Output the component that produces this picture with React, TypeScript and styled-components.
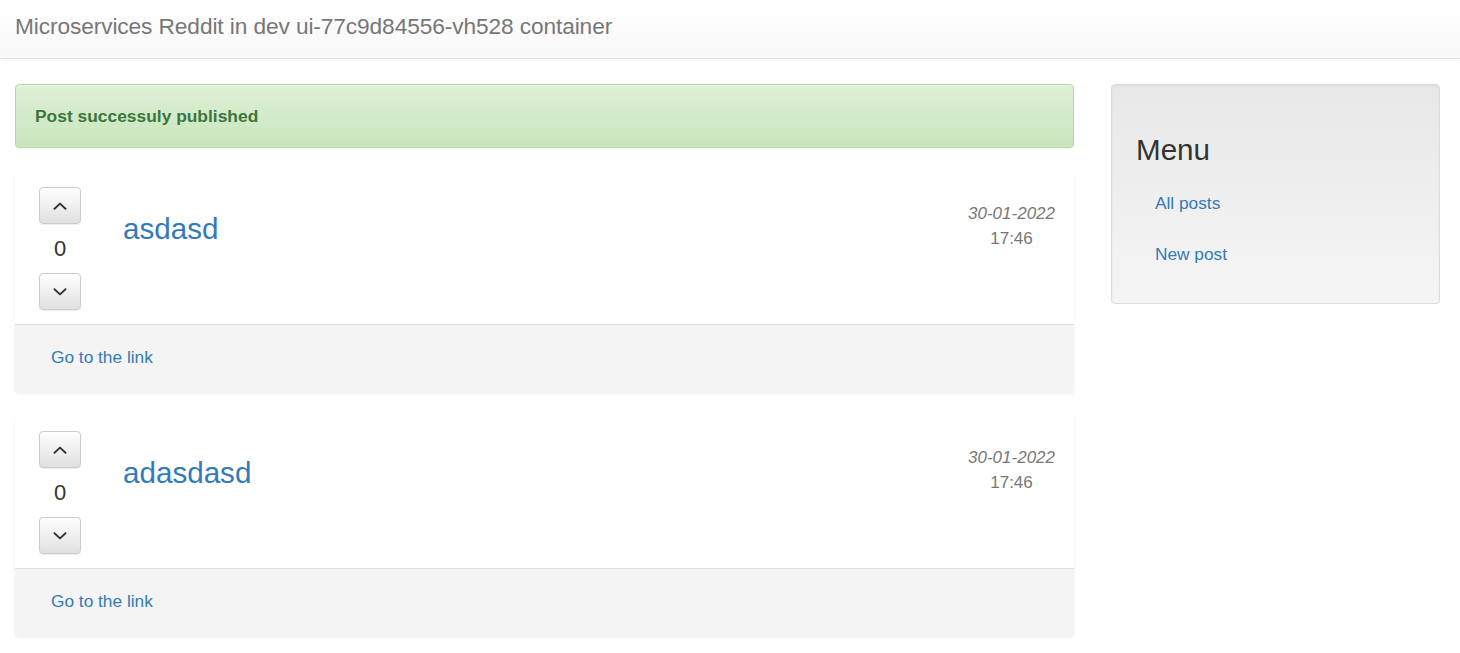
import React from "react";
import styled, { createGlobalStyle } from "styled-components";

const GlobalStyle = createGlobalStyle`
  html, body {
    margin: 0;
    padding: 0;
    background: #fff;
    font-family: "Liberation Sans", Arial, Helvetica, sans-serif;
    font-size: 16px;
    color: #333;
  }
  * { box-sizing: border-box; }
`;

const posts = [
  { id: 1, title: "asdasd", votes: 0, date: "30-01-2022", time: "17:46" },
  { id: 2, title: "adasdasd", votes: 0, date: "30-01-2022", time: "17:46" },
];

export default function App() {
  return (
    <>
      <GlobalStyle />
      <Navbar>
        <Brand href="#">Microservices Reddit in dev ui-77c9d84556-vh528 container</Brand>
      </Navbar>
      <Layout>
        <Main>
          <Alert>Post successuly published</Alert>
          {posts.map((p) => (
            <Post key={p.id}>
              <PostBody>
                <Votes>
                  <VoteButton aria-label="upvote">
                    <Chevron dir="up" />
                  </VoteButton>
                  <VoteCount>{p.votes}</VoteCount>
                  <VoteButton aria-label="downvote">
                    <Chevron dir="down" />
                  </VoteButton>
                </Votes>
                <Title href="#">{p.title}</Title>
                <DateBox>
                  <DateText>{p.date}</DateText>
                  <TimeText>{p.time}</TimeText>
                </DateBox>
              </PostBody>
              <PostFooter>
                <Link href="#">Go to the link</Link>
              </PostFooter>
            </Post>
          ))}
        </Main>
        <Side>
          <Well>
            <MenuTitle>Menu</MenuTitle>
            <MenuList>
              <li>
                <Link href="#">All posts</Link>
              </li>
              <li>
                <Link href="#">New post</Link>
              </li>
            </MenuList>
          </Well>
        </Side>
      </Layout>
    </>
  );
}

function Chevron({ dir }: { dir: "up" | "down" }) {
  return (
    <svg width="14" height="8" viewBox="0 0 14 8" fill="none">
      <path
        d={dir === "up" ? "M1.5 6.8 L7 1.6 L12.5 6.8" : "M1.5 1.2 L7 6.4 L12.5 1.2"}
        stroke="#333"
        strokeWidth="1.9"
        strokeLinecap="round"
        strokeLinejoin="round"
      />
    </svg>
  );
}

const Navbar = styled.nav`
  height: 59px;
  display: flex;
  align-items: center;
  padding: 0 15px 6px;
  background: linear-gradient(to bottom, #ffffff 0%, #f8f8f8 100%);
  border-bottom: 1px solid #e3e3e3;
  box-shadow: inset 0 1px 0 rgba(255, 255, 255, 0.15), 0 1px 5px rgba(0, 0, 0, 0.06);
`;

const Brand = styled.a`
  color: #777;
  font-size: 22.7px;
  letter-spacing: -0.1px;
  text-decoration: none;
`;

const Layout = styled.div`
  display: grid;
  grid-template-columns: 1059px 329px;
  column-gap: 37px;
  padding: 25px 15px 0;
`;

const Main = styled.div`
  display: flex;
  flex-direction: column;
`;

const Alert = styled.div`
  height: 64px;
  display: flex;
  align-items: center;
  padding: 0 19px;
  margin-bottom: 24px;
  border: 1px solid #b2dba1;
  border-radius: 4px;
  background: linear-gradient(to bottom, #dff0d8 0%, #c8e5bc 100%);
  color: #3c763d;
  font-weight: bold;
  font-size: 17.4px;
  box-shadow: inset 0 1px 0 rgba(255, 255, 255, 0.25), 0 1px 2px rgba(0, 0, 0, 0.05);
`;

const Post = styled.div`
  margin-bottom: 23px;
  border-radius: 4px;
  box-shadow: 0 1px 3px rgba(0, 0, 0, 0.07);
  background: #fff;
`;

const PostBody = styled.div`
  height: 153px;
  display: flex;
  align-items: flex-start;
  padding: 15px 19px 0 24px;
  border-bottom: 1px solid #dddddd;
`;

const Votes = styled.div`
  width: 42px;
  display: flex;
  flex-direction: column;
  align-items: center;
`;

const VoteButton = styled.button`
  width: 42px;
  height: 37px;
  padding: 0;
  display: flex;
  align-items: center;
  justify-content: center;
  border: 1px solid #ccc;
  border-radius: 4px;
  background: linear-gradient(to bottom, #ffffff 0%, #e0e0e0 100%);
  box-shadow: inset 0 1px 0 rgba(255, 255, 255, 0.15), 0 1px 1px rgba(0, 0, 0, 0.075);
  cursor: pointer;
`;

const VoteCount = styled.div`
  height: 49px;
  display: flex;
  align-items: center;
  justify-content: center;
  font-size: 22px;
  color: #333;
`;

const Title = styled.a`
  margin: 22px 0 0 42px;
  font-size: 29.6px;
  line-height: 40px;
  color: #337ab7;
  text-decoration: none;
  flex: 1;
`;

const DateBox = styled.div`
  margin-top: 14px;
  display: flex;
  flex-direction: column;
  align-items: center;
  color: #777;
  font-size: 17px;
  line-height: 25px;
`;

const DateText = styled.em``;

const TimeText = styled.span``;

const PostFooter = styled.div`
  height: 68px;
  display: flex;
  align-items: center;
  padding: 0 36px 4px;
  background: #f4f4f4;
  border-radius: 0 0 4px 4px;
`;

const Link = styled.a`
  color: #337ab7;
  font-size: 17.3px;
  text-decoration: none;
`;

const Side = styled.aside``;

const Well = styled.div`
  height: 220px;
  padding: 46px 24px 0;
  border: 1px solid #dcdcdc;
  border-radius: 4px;
  background: linear-gradient(to bottom, #e8e8e8 0%, #f5f5f5 100%);
  box-shadow: inset 0 1px 3px rgba(0, 0, 0, 0.05), 0 1px 0 rgba(255, 255, 255, 0.1);
`;

const MenuTitle = styled.h3`
  margin: 0 0 24px;
  font-size: 29.6px;
  font-weight: normal;
  line-height: 38px;
  color: #333;
`;

const MenuList = styled.ul`
  list-style: none;
  margin: 0;
  padding: 0 0 0 19px;
  display: flex;
  flex-direction: column;
  gap: 30px;

  li {
    line-height: 20px;
  }
`;
